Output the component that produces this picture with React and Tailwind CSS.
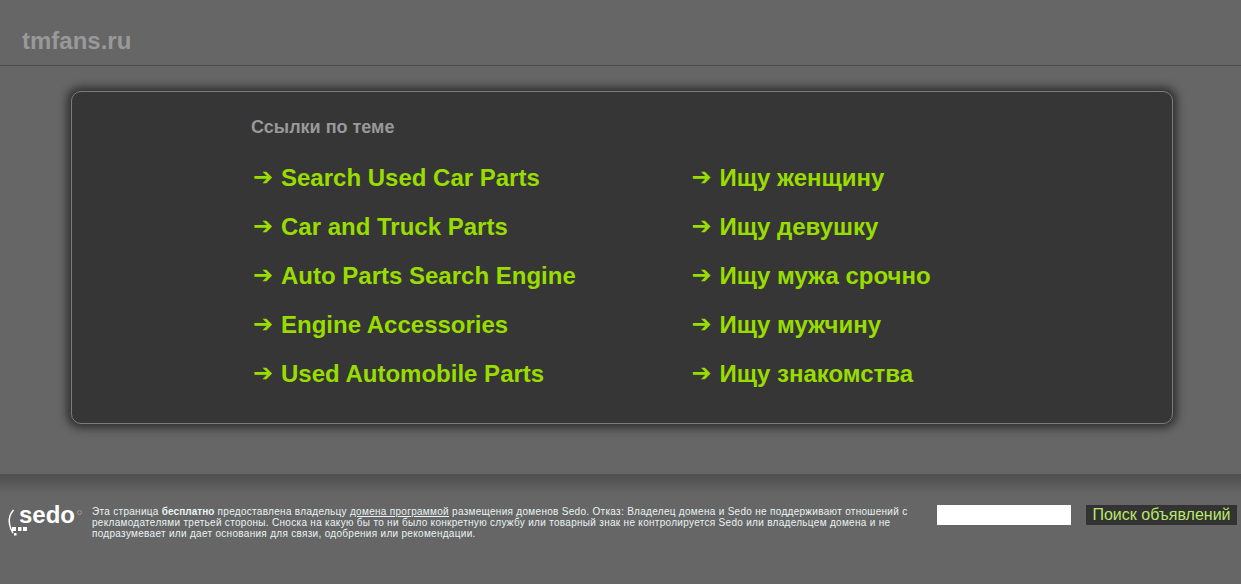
const leftLinks = [
  "Search Used Car Parts",
  "Car and Truck Parts",
  "Auto Parts Search Engine",
  "Engine Accessories",
  "Used Automobile Parts",
];

const rightLinks = [
  "Ищу женщину",
  "Ищу девушку",
  "Ищу мужа срочно",
  "Ищу мужчину",
  "Ищу знакомства",
];

function LinkColumn({ links, className }) {
  return (
    <ul className={className}>
      {links.map((link) => (
        <li key={link} className="flex h-[49px] items-center text-[24px] font-bold leading-[49px] text-[#99dd00]">
          <span className="ml-[-1px] mr-[6px] w-[22px] text-[24px] font-bold font-['DejaVu_Sans',sans-serif]">➔</span>
          <a href="#">{link}</a>
        </li>
      ))}
    </ul>
  );
}

function SedoLogo() {
  return (
    <div className="relative h-[36px] w-[85px] shrink-0 text-white">
      {/* bracket and dots */}
      <svg className="absolute left-0 top-0" width="30" height="36" viewBox="0 0 30 36" fill="none">
        <path d="M13.5 8C10 12 8.5 17 9.5 22C10 25 11 28 13 31" stroke="white" strokeWidth="1.5" />
        <rect x="12" y="25" width="4" height="4" fill="white" />
        <rect x="18" y="25" width="3.5" height="4" fill="white" />
        <rect x="23" y="25" width="4" height="4" fill="white" />
        <rect x="14" y="31" width="2.5" height="2.5" fill="white" />
      </svg>
      <span className="absolute left-[19px] top-[-2px] text-[24px] font-bold leading-[30px]">
        sedo
      </span>
      <span className="absolute left-[77px] top-[8px] h-[5px] w-[5px] rounded-full border border-[#999]" />
    </div>
  );
}

export default function App() {
  return (
    <div className="h-[584px] overflow-hidden bg-[#666666] font-['Liberation_Sans',Arial,sans-serif]">
      <div className="h-[474px] bg-[#666666]">
        <header className="h-[66px] border-b border-[#4d4d4d] pl-[22px] pt-[28px]">
          <h1 className="text-[24px] font-bold leading-[26px] text-[#999999]">tmfans.ru</h1>
        </header>

        <main className="mx-[71px] mt-[25px] h-[333px] w-[1102px] rounded-[10px] border border-[#7b7b7b] bg-[#363636] pl-[179px] pt-[24px] shadow-[0_0_8px_4px_rgba(30,30,30,0.75)]">
          <h2 className="text-[18px] font-bold leading-[22px] text-[#999999]">Ссылки по теме</h2>
          <div className="mt-[15px] flex pl-[3px]">
            <LinkColumn links={leftLinks} className="w-[438px]" />
            <LinkColumn links={rightLinks} className="pl-[0.5px]" />
          </div>
        </main>
      </div>

      <footer className="h-[110px] bg-[linear-gradient(#4e4e4e,#666666_20px)] pt-[28px]">
        <div className="flex items-start">
          <SedoLogo />
          <p className="ml-[7px] mt-[4px] w-[825px] text-[10px] leading-[11px] tracking-[0.3px] text-[#e8f4f4]">
            Эта страница <b className="tracking-[0.06px]">бесплатно</b> предоставлена владельцу <a href="#" className="underline">домена программой</a> размещения доменов Sedo. Отказ: Владелец домена и Sedo не поддерживают отношений с рекламодателями третьей стороны. Сноска на какую бы то ни было конкретную службу или товарный знак не контролируется Sedo или владельцем домена и не подразумевает или дает основания для связи, одобрения или рекомендации.
          </p>
          <div className="ml-[20px] mt-[3px] flex">
            <input className="h-[20px] w-[134px] bg-white" />
            <button className="ml-[15px] h-[20px] w-[151px] bg-[#333333] text-[16px] leading-[20px] text-[#b8e868]">
              Поиск объявлений
            </button>
          </div>
        </div>
      </footer>
    </div>
  );
}
